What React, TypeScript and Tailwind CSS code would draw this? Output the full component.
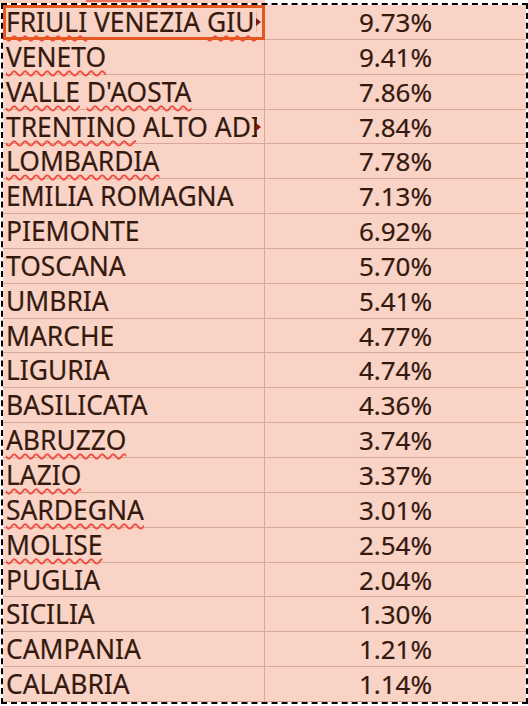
import { FC } from "react";

interface Region {
  name: string;
  pct: string;
  typos: string[]; // words the spell checker flags
  overflow?: boolean;
}

const rows: Region[] = [
  { name: "FRIULI VENEZIA GIULIA", pct: "9.73%", typos: ["FRIULI", "GIULIA"], overflow: true },
  { name: "VENETO", pct: "9.41%", typos: ["VENETO"] },
  { name: "VALLE D'AOSTA", pct: "7.86%", typos: ["VALLE", "D'AOSTA"] },
  { name: "TRENTINO ALTO ADIGE", pct: "7.84%", typos: ["TRENTINO"], overflow: true },
  { name: "LOMBARDIA", pct: "7.78%", typos: ["LOMBARDIA"] },
  { name: "EMILIA ROMAGNA", pct: "7.13%", typos: [] },
  { name: "PIEMONTE", pct: "6.92%", typos: [] },
  { name: "TOSCANA", pct: "5.70%", typos: [] },
  { name: "UMBRIA", pct: "5.41%", typos: [] },
  { name: "MARCHE", pct: "4.77%", typos: [] },
  { name: "LIGURIA", pct: "4.74%", typos: [] },
  { name: "BASILICATA", pct: "4.36%", typos: [] },
  { name: "ABRUZZO", pct: "3.74%", typos: ["ABRUZZO"] },
  { name: "LAZIO", pct: "3.37%", typos: ["LAZIO"] },
  { name: "SARDEGNA", pct: "3.01%", typos: ["SARDEGNA"] },
  { name: "MOLISE", pct: "2.54%", typos: ["MOLISE"] },
  { name: "PUGLIA", pct: "2.04%", typos: [] },
  { name: "SICILIA", pct: "1.30%", typos: [] },
  { name: "CAMPANIA", pct: "1.21%", typos: [] },
  { name: "CALABRIA", pct: "1.14%", typos: [] },
];

const Name: FC<{ row: Region }> = ({ row }) => {
  const words = row.name.split(" ");
  return (
    <>
      {words.map((w, i) => (
        <span key={i}>
          <span
            className={
              row.typos.includes(w)
                ? "underline decoration-wavy decoration-[#ef4f40] decoration-2 underline-offset-[3px]"
                : ""
            }
          >
            {w}
          </span>
          {i < words.length - 1 ? " " : ""}
        </span>
      ))}
    </>
  );
};

const App: FC = () => {
  return (
    <div className="w-[528px] h-[706px] bg-white overflow-hidden font-['Noto_Sans',sans-serif] text-[26px] text-[#34190f] [-webkit-text-stroke:0.2px_#34190f]">
      {/* tail of the row above the copied range */}
      <div className="flex h-[3px]">
        <div className="relative w-[265px] bg-[#f9d3c5]">
          <div className="absolute left-[86px] top-0 h-[2px] w-[64px] bg-[#ec6a58]" />
        </div>
        <div className="flex-1 bg-white" />
      </div>

      {/* copied range, marching-ants border */}
      <div className="relative ml-[1px] w-[527px] border-2 border-dashed border-black bg-white">
        {rows.map((row, idx) => (
          <div key={idx} className="flex h-[34.85px] bg-[#f9d3c5] border-b border-[#d9a898] leading-[34.85px]">
            <div className="relative w-[262px] shrink-0 border-r border-[#d9a898] pl-[3px] text-[26.4px] whitespace-nowrap">
              <div className={row.overflow ? "w-[251px] overflow-x-clip" : ""}>
                <Name row={row} />
              </div>
              {row.overflow && (
                <span className="absolute right-[3px] top-[13px] w-0 h-0 border-y-[4px] border-y-transparent border-l-[5px] border-l-[#7a1a14]" />
              )}
            </div>
            <div className="flex-1 text-center whitespace-nowrap">{row.pct}</div>
          </div>
        ))}

        {/* active cell cursor */}
        <div className="absolute left-0 top-0 w-[262px] h-[35px] border-[3px] border-[#e4581f] pointer-events-none" />
      </div>
    </div>
  );
};

export default App;
